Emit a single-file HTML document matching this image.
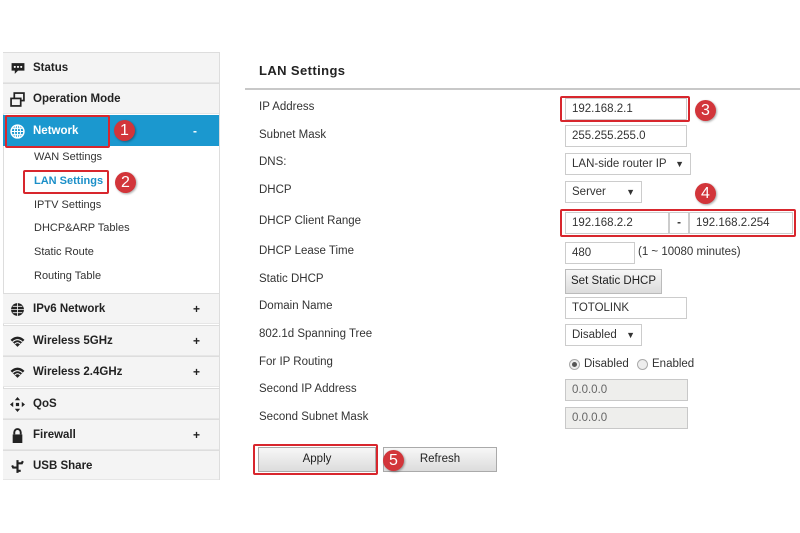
<!DOCTYPE html>
<html><head><meta charset="utf-8"><style>
*{box-sizing:border-box;margin:0;padding:0}
body{width:800px;height:533px;background:#fff;font-family:"Liberation Sans",Arial,sans-serif;position:relative;overflow:hidden;color:#333}
.a{position:absolute}
.side{left:3px;top:52px;width:217px;height:428px;border:1px solid #ddd;border-top:none;background:#fff}
.item{position:absolute;left:3px;width:216px;height:31px;background:#f4f4f4;border-top:1px solid #ddd;border-bottom:1px solid #e6e6e6;font-size:11.5px;font-weight:bold;color:#222;line-height:30px;padding-left:30px}
.item svg{position:absolute;left:7px;top:8px}
.item .pl{position:absolute;left:190px;top:0;font-size:12px}
.sub{position:absolute;left:34px;font-size:11px;color:#333}
.lbl{position:absolute;left:259px;font-size:11.5px;color:#333}
.inp{position:absolute;left:565px;height:22px;border:1px solid #ccc;background:#fff;font-size:11.5px;line-height:20px;padding-left:6px;color:#333}
.dis{background:#eeeeec;color:#666;border-color:#c8c8c8}
.sel:after{content:"▼";position:absolute;right:6px;top:0;font-size:9px}
.btn{position:absolute;height:25px;border:1px solid #aaa;background:linear-gradient(#f7f7f7,#dcdcdc);font-size:11.5px;text-align:center;line-height:23px;color:#222}
.red{position:absolute;border:2px solid #d8262d;border-radius:2px}
.badge{position:absolute;width:21px;height:21px;border-radius:50%;background:#d2353a;color:#fff;font-size:16px;line-height:21px;text-align:center;box-shadow:1px 1px 2px rgba(0,0,0,.35)}
</style></head><body>
<div class="a side"></div>
<div class="item" style="top:52px"><svg width="16" height="15" viewBox="0 0 14 14"><path d="M1 2h12v7H7l-3 3v-3H1z" fill="#222"/><circle cx="4" cy="5.5" r="1" fill="#fff"/><circle cx="7" cy="5.5" r="1" fill="#fff"/><circle cx="10" cy="5.5" r="1" fill="#fff"/></svg>Status</div>
<div class="item" style="top:83px"><svg width="15" height="15" viewBox="0 0 14 14"><rect x="4" y="1" width="9" height="7" fill="none" stroke="#222" stroke-width="1.6"/><rect x="1" y="6" width="9" height="7" fill="#f4f4f4" stroke="#222" stroke-width="1.6"/></svg>Operation Mode</div>
<div class="item" style="top:115px;background:#1b98cf;color:#fff;border-color:#1b98cf"><svg width="15" height="15" viewBox="0 0 14 14"><circle cx="7" cy="7" r="6" fill="none" stroke="#fff" stroke-width="1.4"/><path d="M1 7h12M7 1v12M2.5 4h9M2.5 10h9" stroke="#fff" stroke-width="1"/><ellipse cx="7" cy="7" rx="2.8" ry="6" fill="none" stroke="#fff"/></svg>Network<span class="pl" style="color:#fff">-</span></div>
<div class="sub" style="top:151px">WAN Settings</div>
<div class="sub" style="top:175px;color:#1b8fc8;font-weight:bold">LAN Settings</div>
<div class="sub" style="top:199px">IPTV Settings</div>
<div class="sub" style="top:222px">DHCP&amp;ARP Tables</div>
<div class="sub" style="top:246px">Static Route</div>
<div class="sub" style="top:270px">Routing Table</div>
<div class="item" style="top:293px"><svg width="15" height="15" viewBox="0 0 14 14"><circle cx="7" cy="7" r="6" fill="#222"/><path d="M1 7h12M7 1v12M2.5 4h9M2.5 10h9" stroke="#f4f4f4" stroke-width=".8"/></svg>IPv6 Network<span class="pl">+</span></div>
<div class="item" style="top:325px"><svg width="15" height="15" viewBox="0 0 14 14"><path d="M0.5 5.5Q7 -0.5 13.5 5.5L7 12z" fill="#222"/><path d="M2.5 7.3Q7 3.3 11.5 7.3M4.5 9.2Q7 7 9.5 9.2" stroke="#f4f4f4" stroke-width="1" fill="none"/></svg>Wireless 5GHz<span class="pl">+</span></div>
<div class="item" style="top:356px"><svg width="15" height="15" viewBox="0 0 14 14"><path d="M0.5 5.5Q7 -0.5 13.5 5.5L7 12z" fill="#222"/><path d="M2.5 7.3Q7 3.3 11.5 7.3M4.5 9.2Q7 7 9.5 9.2" stroke="#f4f4f4" stroke-width="1" fill="none"/></svg>Wireless 2.4GHz<span class="pl">+</span></div>
<div class="item" style="top:388px"><svg width="15" height="15" viewBox="0 0 14 14"><path d="M7 0l2.5 3h-5zM7 14l2.5-3h-5zM0 7l3-2.5v5zM14 7l-3-2.5v5z" fill="#222"/><rect x="5.5" y="5.5" width="3" height="3" fill="#222"/></svg>QoS</div>
<div class="item" style="top:419px"><svg width="15" height="15" viewBox="0 0 14 14"><path d="M4 6V4a3 3 0 0 1 6 0v2" fill="none" stroke="#222" stroke-width="1.8"/><rect x="2.5" y="6" width="9" height="8" fill="#222"/></svg>Firewall<span class="pl">+</span></div>
<div class="item" style="top:450px;height:30px"><svg width="15" height="15" viewBox="0 0 14 14"><path d="M7 1v12M7 4h4l1-2M7 8H3L2 6M7 11h3" stroke="#222" stroke-width="2" fill="none"/></svg>USB Share</div>

<div class="a" style="left:259px;top:63px;font-size:13px;font-weight:bold;letter-spacing:.4px;color:#222">LAN Settings</div>
<div class="a" style="left:245px;top:88px;width:555px;height:2px;background:#c8c8c8"></div>

<div class="lbl" style="top:101px">IP Address</div>
<div class="lbl" style="top:129px">Subnet Mask</div>
<div class="lbl" style="top:156px">DNS:</div>
<div class="lbl" style="top:184px">DHCP</div>
<div class="lbl" style="top:215px">DHCP Client Range</div>
<div class="lbl" style="top:245px">DHCP Lease Time</div>
<div class="lbl" style="top:273px">Static DHCP</div>
<div class="lbl" style="top:300px">Domain Name</div>
<div class="lbl" style="top:328px">802.1d Spanning Tree</div>
<div class="lbl" style="top:356px">For IP Routing</div>
<div class="lbl" style="top:383px">Second IP Address</div>
<div class="lbl" style="top:411px">Second Subnet Mask</div>

<div class="inp" style="top:98px;width:122px">192.168.2.1</div>
<div class="inp" style="top:125px;width:122px">255.255.255.0</div>
<div class="inp sel" style="top:153px;width:126px">LAN-side router IP</div>
<div class="inp sel" style="top:181px;width:77px">Server</div>
<div class="inp" style="top:212px;width:104px">192.168.2.2</div>
<div class="inp" style="top:212px;left:669px;width:20px;padding:0;text-align:center;font-weight:bold">-</div>
<div class="inp" style="top:212px;left:689px;width:104px">192.168.2.254</div>
<div class="inp" style="top:242px;width:70px">480</div>
<div class="a" style="left:638px;top:246px;font-size:11.5px">(1 ~ 10080 minutes)</div>
<div class="btn" style="left:565px;top:269px;width:97px;border-color:#bbb">Set Static DHCP</div>
<div class="inp" style="top:297px;width:122px">TOTOLINK</div>
<div class="inp sel" style="top:324px;width:77px">Disabled</div>
<div class="a" style="left:569px;top:359px;width:11px;height:11px;border-radius:50%;border:1px solid #aaa;background:#eee"><div style="width:5px;height:5px;border-radius:50%;background:#555;margin:2px"></div></div>
<div class="a" style="left:584px;top:358px;font-size:11.5px">Disabled</div>
<div class="a" style="left:637px;top:359px;width:11px;height:11px;border-radius:50%;border:1px solid #aaa;background:#eee"></div>
<div class="a" style="left:652px;top:358px;font-size:11.5px">Enabled</div>
<div class="inp dis" style="top:379px;width:123px">0.0.0.0</div>
<div class="inp dis" style="top:407px;width:123px">0.0.0.0</div>

<div class="btn" style="left:258px;top:447px;width:118px">Apply</div>
<div class="btn" style="left:383px;top:447px;width:114px">Refresh</div>

<div class="red" style="left:5px;top:115px;width:105px;height:33px"></div>
<div class="red" style="left:23px;top:170px;width:86px;height:24px"></div>
<div class="red" style="left:560px;top:96px;width:130px;height:26px"></div>
<div class="red" style="left:560px;top:209px;width:236px;height:28px"></div>
<div class="red" style="left:253px;top:444px;width:125px;height:31px"></div>
<div class="badge" style="left:114px;top:120px">1</div>
<div class="badge" style="left:115px;top:172px">2</div>
<div class="badge" style="left:695px;top:100px">3</div>
<div class="badge" style="left:695px;top:183px">4</div>
<div class="badge" style="left:383px;top:450px">5</div>
</body></html>
